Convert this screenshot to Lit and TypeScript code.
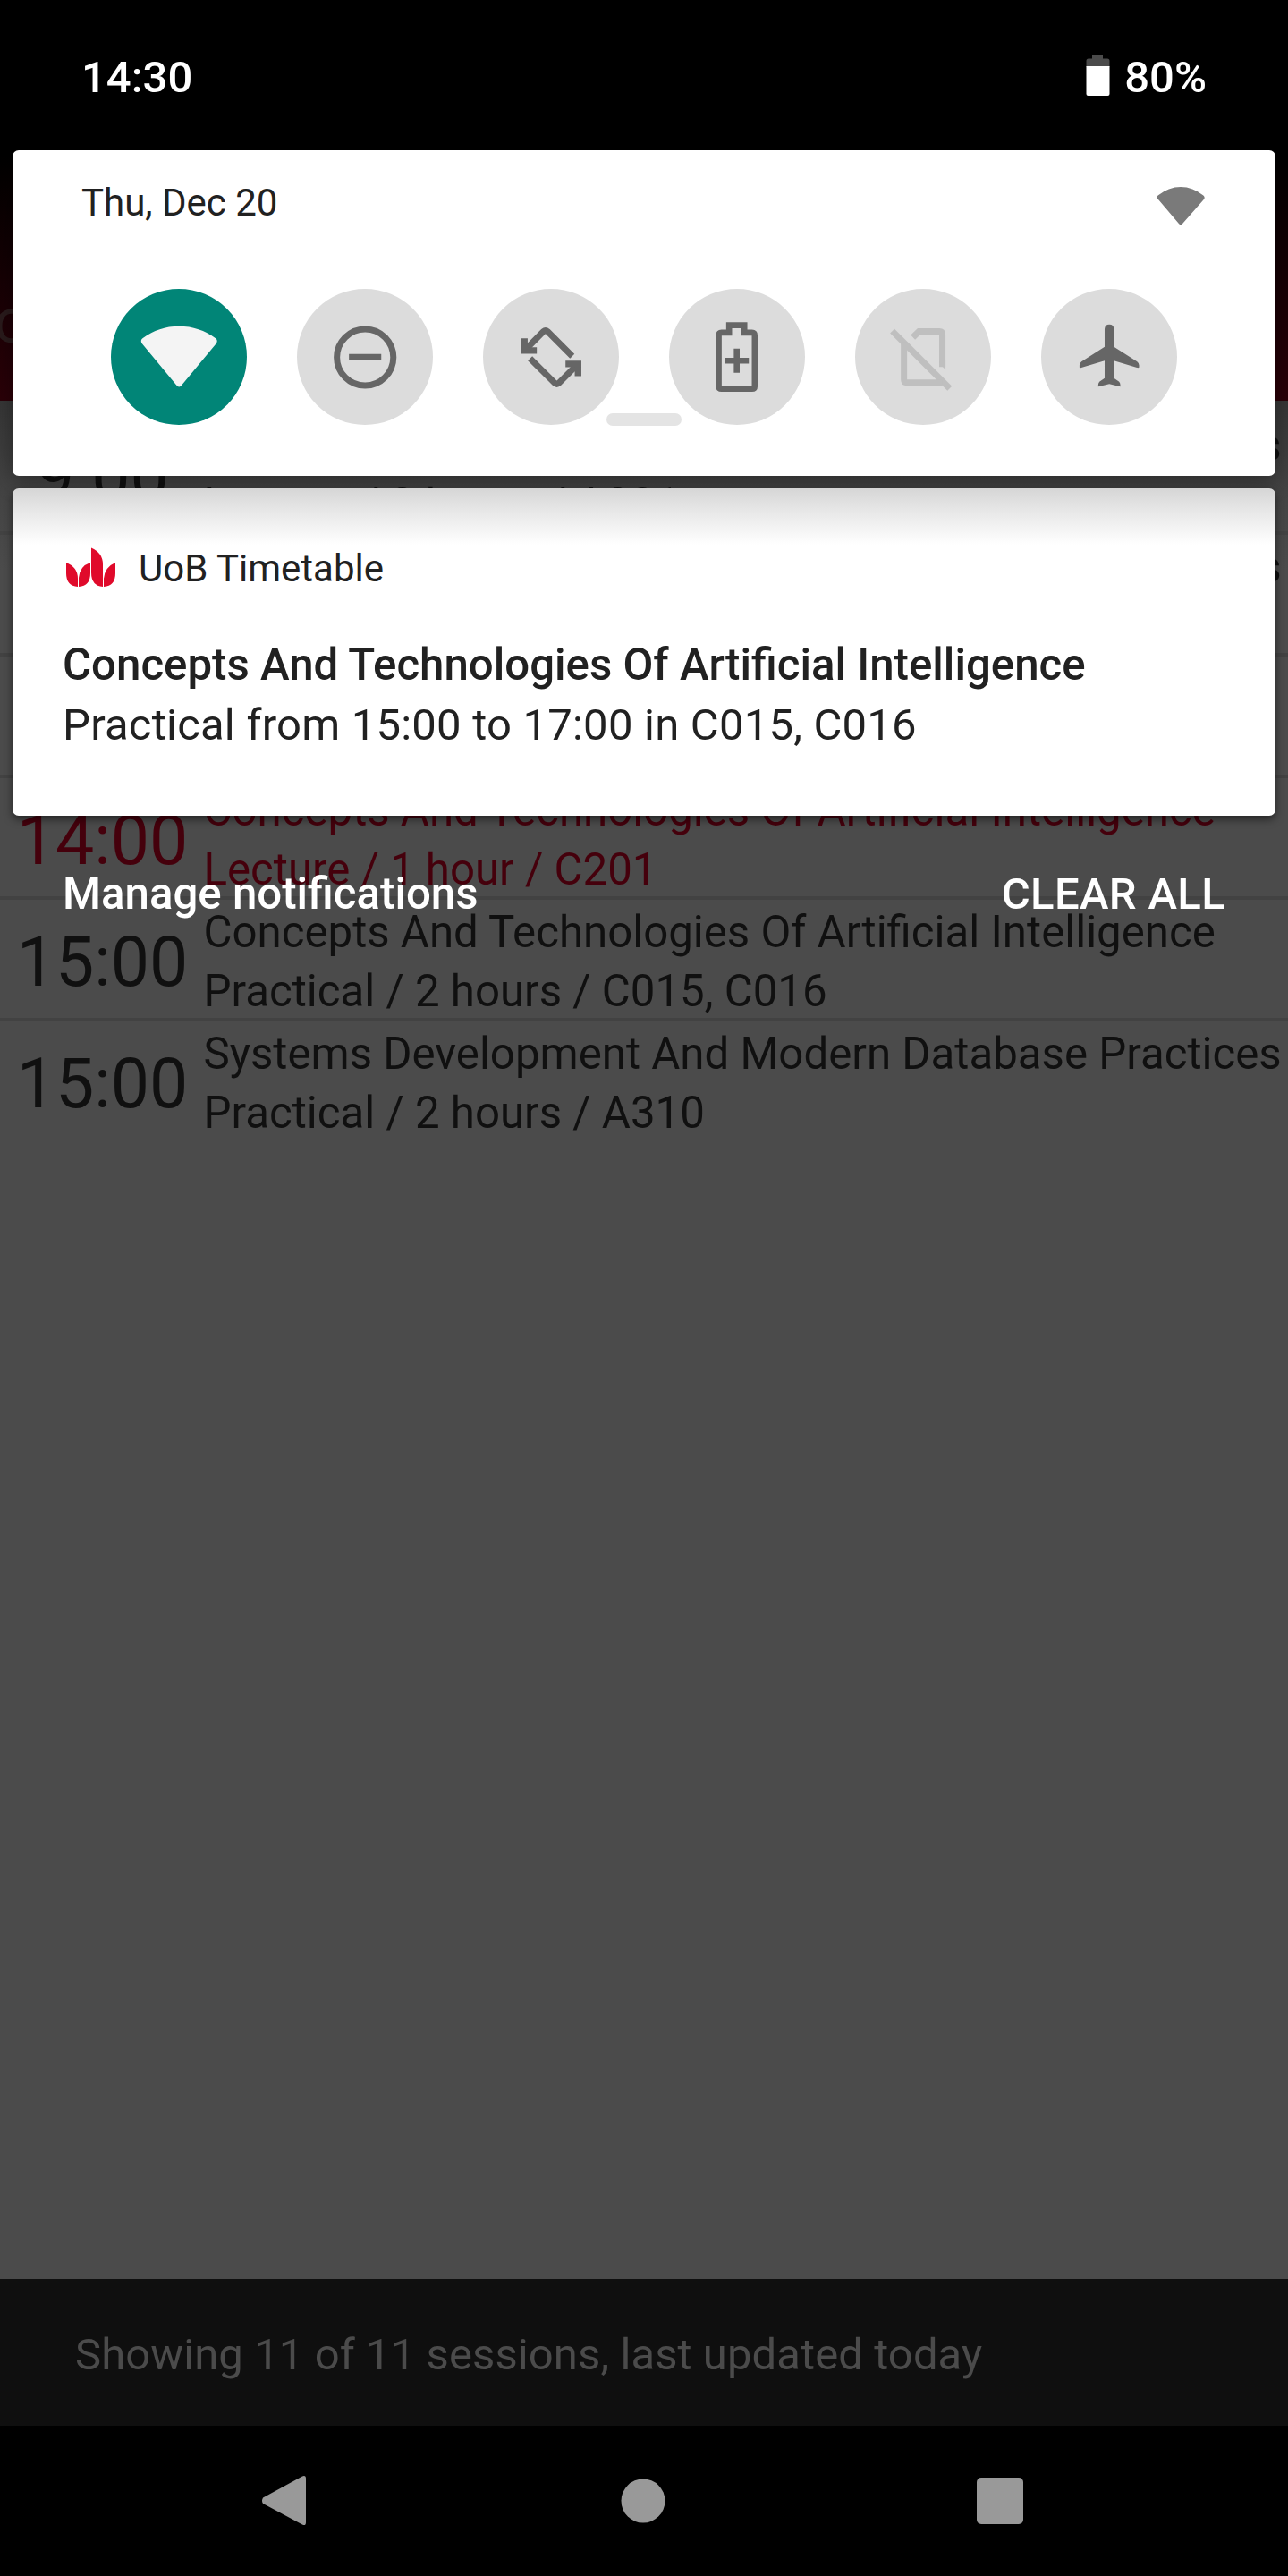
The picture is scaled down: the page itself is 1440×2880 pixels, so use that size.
import { LitElement, html, css, svg } from "lit";
import { customElement, property } from "lit/decorators.js";

interface Session { time: string; title: string; detail: string; current?: boolean; }

const SYSTEMS = "Systems Development And Modern Database Practices";
const CONCEPTS = "Concepts And Technologies Of Artificial Intelligence";

const sessions: Session[] = [
  { time: "9:00", title: SYSTEMS, detail: "Lecture / 2 hours / A201" },
  { time: "", title: SYSTEMS, detail: "" },
  { time: "", title: "", detail: "" },
  { time: "14:00", title: CONCEPTS, detail: "Lecture / 1 hour / C201", current: true },
  { time: "15:00", title: CONCEPTS, detail: "Practical / 2 hours / C015, C016" },
  { time: "15:00", title: SYSTEMS, detail: "Practical / 2 hours / A310" },
];

const wifi = svg`<path d="M2.5 21.5Q-1 18.5 2.6 15.4Q21 0 43 0Q65 0 83.4 15.4Q87 18.5 84.5 22L46 66Q43 69 40 66L2.5 21.5Z"/>`;

const tiles = [
  { cls: "tile on", icon: svg`<g transform="translate(33.3 41.6)"><path d="M1.5 19.5Q-1 16 2 13.5Q20 0 42.7 0Q65.500 0 83.500 13.500Q86.500 16 84 19.500L45.700 65.500Q42.700 69.500 39.700 65.500Z"/></g>` },
  { cls: "tile", icon: svg`<circle cx="76" cy="76.300" r="31.500" fill="none" stroke="currentColor" stroke-width="7"/><path d="M58 72.500H94V79.500H58Z"/>` },
  { cls: "tile", icon: svg`<g fill="none" stroke="currentColor" stroke-width="7"><path d="M99.500 75L72 47.500Q69.700 45.400 67.400 47.500L48 67"/><path d="M52.500 77.500L80 105Q82.300 107.100 84.600 105L104 85.500"/></g><path d="M42.300 55H49.800V65H60V72.300H42.300ZM109.700 97.300H102.300V87.300H92V80H109.700Z"/>` },
  { cls: "tile", icon: svg`<path fill-rule="evenodd" d="M63.700 37.200H87.300V45.500H92.500Q98.800 45.500 98.800 52V108.500Q98.800 114.800 92.500 114.800H58.500Q52.200 114.800 52.200 108.500V52Q52.200 45.500 58.500 45.500H63.700ZM58.700 52V108H92.300V52H80.700V44H70.300V52Z"/><path d="M72.200 66.500H78.800V76.800H89V83.400H78.800V93.500H72.200V83.400H62V76.800H72.200Z"/>` },
  { cls: "tile off", icon: svg`<g fill="none" stroke="currentColor" stroke-width="7"><path d="M41.500 47L105.500 111"/><path d="M54.500 59V101Q54.500 104.500 58 104.500H97"/><path d="M64.500 54L71.200 47.500H94Q97.300 47.500 97.300 51V87"/></g><path d="M93.800 83L100.800 90V80H93.800Z"/>` },
  { cls: "tile", icon: svg`<path d="M109.200 87.500V85Q109 82.500 107 81L81.200 64.700V45Q81 39.700 76 39.700Q71 39.700 70.800 45V64.700L45 81Q43 82.500 42.800 85V87.500L44 88L70.800 80V99.500L65 103.500Q63.700 105 63.700 107V109L76 106L88.300 109V107Q88.300 105 87 103.500L81.200 99.500V80L108 88Z"/>` },
];

@customElement("session-row")
class SessionRow extends LitElement {
  @property({ attribute: false }) session!: Session;
  static styles = css`
    :host { display: block; box-sizing: border-box; height: 136px; border-bottom: 4px solid #424242; color: #101010; }
    :host([last]) { border-bottom-color: transparent; }
    .row { display: grid; grid-template-columns: 192px 1fr; column-gap: 17px; padding-left: 18.5px; height: 132px; }
    .current { color: #45000c; }
    .time { font-size: 77px; line-height: 140px; text-align: center; white-space: nowrap; }
    .copy { font-size: 49.2px; line-height: 66.3px; white-space: nowrap; padding-top: 2.5px; }
    .line { height: 66.3px; }
  `;
  render() {
    const s = this.session;
    return html`<div class="row ${s.current ? "current" : ""}">
      <div class="time">${s.time}</div>
      <div class="copy"><div class="line">${s.title}</div><div class="line">${s.detail}</div></div>
    </div>`;
  }
}

@customElement("app-root")
class AppRoot extends LitElement {
  static styles = css`
    :host { display: block; width: 1440px; height: 2880px; overflow: hidden; position: relative; background: #4b4b4b; font-family: Roboto, "Noto Sans", sans-serif; }
    .app { display: flex; flex-direction: column; height: 2880px; }
    .appbar { height: 448px; flex: none; box-sizing: border-box; padding-top: 318px; background: linear-gradient(#000 168px, #2b0008 448px); color: #2a1b1c; font-size: 70px; line-height: 82px; text-indent: -7px; }
    .list { flex: 1; padding-top: 14px; background: linear-gradient(#363636, #424242 90px, #4b4b4b 190px); }
    .footer { height: 164px; display: flex; align-items: center; padding-left: 84px; padding-top: 4px; box-sizing: border-box; background: #0f0f0f; color: #4b4b4b; font-size: 49px; letter-spacing: .09px; }
    .nav { height: 168px; flex: none; background: #000; display: flex; justify-content: center; }
    .nav svg { width: 860px; height: 168px; fill: #999; }
    .shade { position: absolute; inset: 0; display: flex; flex-direction: column; }
    .status { height: 168px; box-sizing: border-box; padding: 4px 91px 0; display: flex; align-items: center; justify-content: space-between; color: #fff; font-size: 49px; font-weight: 500; }
    .battery { display: flex; align-items: center; gap: 16px; }
    .battery svg { width: 27px; height: 46px; margin-top: -4px; }
    .card { margin: 0 14px; background: #fff; border-radius: 7px; color: #212121; flex: none; box-sizing: border-box; }
    .quick { height: 364px; box-shadow: 0 6px 24px rgba(0,0,0,.35); }
    .top { height: 116px; box-sizing: border-box; display: flex; justify-content: space-between; padding: 34px 79px 0 77px; font-size: 42px; line-height: 49px; }
    .top svg { width: 54px; height: 43px; margin-top: 7px; fill: #7a7a7a; }
    .tiles { display: flex; gap: 55.600px; padding: 38.700px 0 0 109.700px; }
    .tile { width: 152.400px; height: 152.400px; border-radius: 50%; background: #dcdcdc; color: #666; flex: none; }
    .tile svg { width: 152.400px; height: 152.400px; display: block; fill: currentColor; }
    .on { background: #018577; color: #f4f4f4; }
    .off { color: #bfbfbf; }
    .handle { width: 84px; height: 14px; border-radius: 7px; background: #e4e4e4; position: absolute; left: 678px; top: 462px; }
    .note { margin-top: 14px; height: 365.500px; padding: 65px 56px 0; box-shadow: 0 4px 10px rgba(0,0,0,.5); background: linear-gradient(#d6d6d6, #e9e9e9 28px, #fff 63px); }
    .from { display: flex; align-items: center; font-size: 42px; line-height: 50px; gap: 25px; padding-left: 2px; }
    .from svg { width: 58px; height: 50px; fill: #e00a2b; }
    .title { font-size: 49.2px; font-weight: 500; line-height: 68px; margin-top: 48px; white-space: nowrap; }
    .body { font-size: 49px; line-height: 68px; letter-spacing: .22px; }
    .actions { display: flex; justify-content: space-between; padding: 53.500px 70px 0; color: #fff; font-size: 49.2px; font-weight: 500; line-height: 69px; }
    .clear { font-size: 49px; letter-spacing: .35px; }
  `;
  render() {
    return html`
      <div class="app">
        <div class="appbar">o</div>
        <div class="list">${sessions.map((s, i) => html`<session-row .session=${s} ?last=${i === sessions.length - 1}></session-row>`)}</div>
        <div class="footer">Showing 11 of 11 sessions, last updated today</div>
        <div class="nav"><svg viewBox="290 0 860 168"><path d="M294 80.500L338 56.500Q342 55 342 59V108Q342 112.500 338 110.500L294 87Q292 84 294 80.500Z"/><circle cx="719" cy="84" r="24.500"/><rect x="1092" y="58" width="52" height="52" rx="5"/></svg></div>
      </div>
      <div class="shade">
        <div class="status"><span>14:30</span><span class="battery"><svg viewBox="0 0 27 46"><path fill="#4b4b4b" d="M7 0H19V4.500H24Q26.500 4.500 26.500 7V14H.5V7Q.5 4.500 3 4.500H7Z"/><path fill="#fff" d="M.5 13H26.500V44Q26.500 46 24.500 46H2.500Q.5 46 .5 44Z"/></svg>80%</span></div>
        <div class="card quick">
          <div class="top"><span>Thu, Dec 20</span><svg viewBox="0 0 86 69" preserveAspectRatio="none">${wifi}</svg></div>
          <div class="tiles">${tiles.map(t => html`<div class=${t.cls}><svg viewBox="0 0 152 152">${t.icon}</svg></div>`)}</div>
          <div class="handle"></div>
        </div>
        <div class="card note">
          <div class="from"><svg viewBox="0 0 58 50"><path d="M2 18Q15 23 15 36V45Q2 44 2 30ZM29 18V30Q29 44 16 45V35Q17 22 29 18ZM30 1.500Q43 7 43 20V45Q30 44 30 29ZM57 18V30Q57 44 44 45V36Q45 23 57 18Z"/></svg><span>UoB Timetable</span></div>
          <div class="title">Concepts And Technologies Of Artificial Intelligence</div>
          <div class="body">Practical from 15:00 to 17:00 in C015, C016</div>
        </div>
        <div class="actions"><span>Manage notifications</span><span class="clear">CLEAR ALL</span></div>
      </div>`;
  }
}
